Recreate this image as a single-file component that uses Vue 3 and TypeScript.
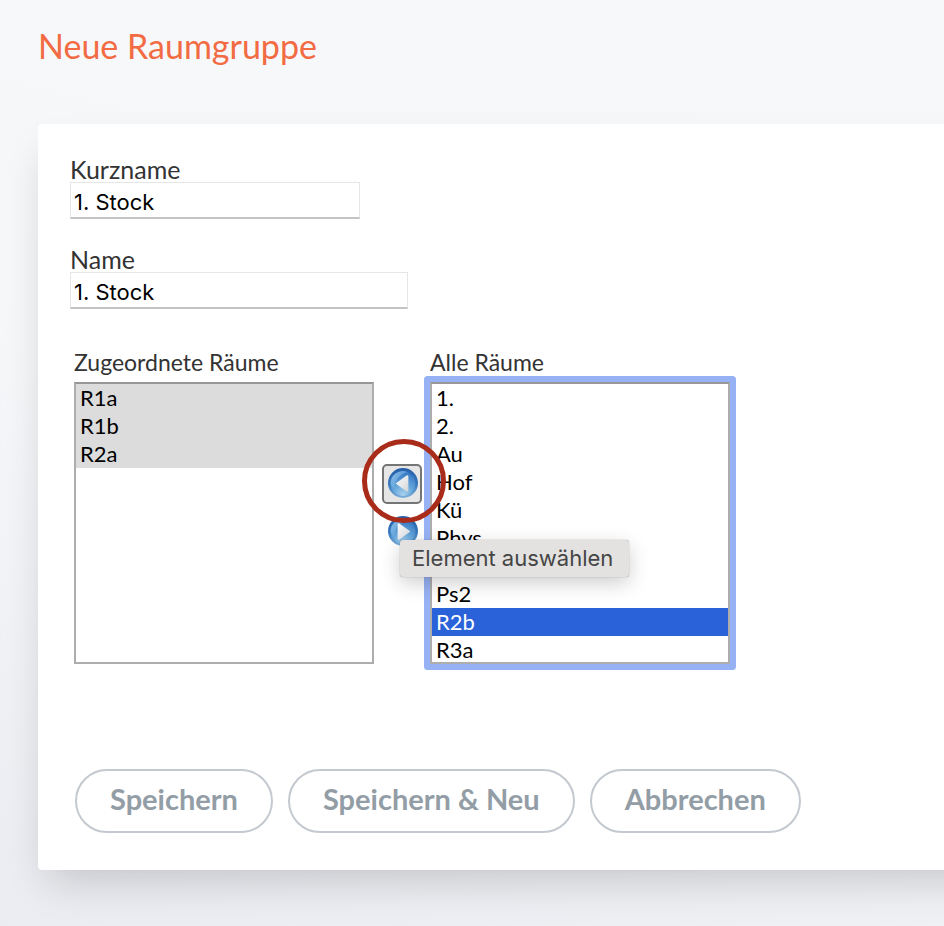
<script setup lang="ts">
import { onMounted, ref } from 'vue'

const shortName = ref('1. Stock')
const name = ref('1. Stock')

const assignedRooms = ['R1a', 'R1b', 'R2a']
const allRooms = ['1.', '2.', 'Au', 'Hof', 'Kü', 'Phys', 'Ps1', 'Ps2', 'R2b', 'R3a']

const assignedSelection = ref<string[]>([...assignedRooms])
const roomSelection = ref<string[]>(['R2b'])

const allRoomsList = ref<HTMLSelectElement | null>(null)
onMounted(() => allRoomsList.value?.focus({ preventScroll: true }))
</script>

<template>
  <main class="page">
    <h1 class="title">Neue Raumgruppe</h1>
    <form class="card" @submit.prevent>
      <div class="field">
        <label for="short-name">Kurzname</label>
        <input id="short-name" v-model="shortName" class="text short" type="text" />
      </div>
      <div class="field">
        <label for="name">Name</label>
        <input id="name" v-model="name" class="text long" type="text" />
      </div>

      <div class="picker">
        <div class="column">
          <label for="assigned">Zugeordnete Räume</label>
          <select id="assigned" v-model="assignedSelection" class="list assigned" multiple>
            <option v-for="room in assignedRooms" :key="room" :value="room">{{ room }}</option>
          </select>
        </div>

        <div class="moves">
          <div class="anchor">
            <button class="move active" type="button" aria-describedby="tip" aria-label="Element auswählen">
              <svg class="orb" viewBox="0 0 32 32" aria-hidden="true">
                <defs>
                  <linearGradient id="rim" x1="0" y1="0" x2="0" y2="1">
                    <stop offset="0" stop-color="#2860a8" />
                    <stop offset="0.55" stop-color="#3678bd" />
                    <stop offset="1" stop-color="#7fb0da" />
                  </linearGradient>
                  <radialGradient id="core" cx="0.5" cy="0.95" r="0.9">
                    <stop offset="0" stop-color="#a8d2ee" />
                    <stop offset="0.45" stop-color="#68a8dc" />
                    <stop offset="1" stop-color="#3577c2" />
                  </radialGradient>
                  <linearGradient id="gloss" x1="0" y1="0" x2="1" y2="1">
                    <stop offset="0" stop-color="#a9d6f5" stop-opacity="0.95" />
                    <stop offset="0.5" stop-color="#8cc2ec" stop-opacity="0.4" />
                    <stop offset="1" stop-color="#8cc2ec" stop-opacity="0" />
                  </linearGradient>
                  <linearGradient id="arrow" x1="0" y1="0" x2="1" y2="1">
                    <stop offset="0" stop-color="#f8f9fa" />
                    <stop offset="0.6" stop-color="#e6e7e9" />
                    <stop offset="1" stop-color="#cfd2d5" />
                  </linearGradient>
                </defs>
                <circle cx="17" cy="15" r="15" fill="url(#rim)" />
                <circle cx="17" cy="15.5" r="12.4" fill="url(#core)" />
                <path d="M4.8 17A12.2 12.2 0 0 1 22 4.2C14 6 9 11 8 21Z" fill="url(#gloss)" />
                <path d="M9.6 15.6L20.6 7.6Q22.4 6.8 22.4 8.8V22.2Q22.4 24.4 20.6 23.6Z" fill="url(#arrow)" />
              </svg>
            </button>
            <span class="ring"></span>
            <span id="tip" class="tooltip" role="tooltip">Element auswählen</span>
          </div>
          <button class="move" type="button" aria-label="Element entfernen">
            <svg class="orb" viewBox="0 0 32 32" aria-hidden="true">
              <circle cx="17" cy="16" r="15" fill="url(#rim)" />
              <circle cx="17" cy="16.5" r="12.4" fill="url(#core)" />
              <path d="M4.8 18A12.2 12.2 0 0 1 22 5.2C14 7 9 12 8 22Z" fill="url(#gloss)" />
              <path d="M24.4 16.6L13.4 8.6Q11.6 7.8 11.6 9.8V23.2Q11.6 25.4 13.4 24.6Z" fill="url(#arrow)" />
            </svg>
          </button>
        </div>

        <div class="column">
          <label for="all">Alle Räume</label>
          <select id="all" ref="allRoomsList" v-model="roomSelection" class="list all" multiple>
            <option v-for="room in allRooms" :key="room" :value="room">{{ room }}</option>
          </select>
        </div>
      </div>

      <div class="actions">
        <button class="pill" type="submit">Speichern</button>
        <button class="pill" type="submit">Speichern &amp; Neu</button>
        <button class="pill" type="button">Abbrechen</button>
      </div>
    </form>
  </main>
</template>

<style>
body {
  margin: 0;
}
</style>

<style scoped>
.page {
  box-sizing: border-box;
  min-height: 100vh;
  padding: 22px 0 56px 38px;
  overflow: hidden;
  background: linear-gradient(195deg, #f7f8fa 0%, #f6f7f9 50%, #ebecf1 100%);
  color: #333;
  font-family: Avenir, Lato, sans-serif;
}

.title {
  margin: 0 0 54px;
  color: #f26b43;
  font-size: 34px;
  font-weight: 400;
  line-height: 48px;
}

/* The card runs past the right edge of the window. */
.card {
  box-sizing: border-box;
  margin-right: -80px;
  padding: 32px 112px 37px 32px;
  border-radius: 4px;
  background: #fff;
  box-shadow: 0 20px 40px -10px rgba(0, 0, 0, 0.18);
}

.field {
  display: flex;
  flex-direction: column;
  align-items: flex-start;
  margin-bottom: 27px;
  font-size: 25px;
  line-height: 26px;
}

.text {
  box-sizing: border-box;
  max-width: 100%;
  height: 37px;
  padding: 4px 3px 0;
  border: 1px solid #e6e6e6;
  border-bottom: 2px solid #c4c4c4;
  border-radius: 0;
  outline: none;
  background: #fff;
  color: #000;
  font-family: Inter, sans-serif;
  font-size: 22px;
}

.short {
  width: 290px;
}

.long {
  width: 338px;
}

.picker {
  display: flex;
  padding: 11px 4px 0;
}

.column {
  display: flex;
  flex-direction: column;
  width: 300px;
  font-size: 23px;
  line-height: 30px;
}

.column label {
  margin-bottom: 5px;
}

.list {
  box-sizing: border-box;
  width: 100%;
  height: 282px;
  padding: 0;
  overflow: hidden;
  border: 2px solid #adadad;
  border-top-color: #979797;
  border-radius: 0;
  outline: none;
  background: #fff;
  color: #000;
  font-family: inherit;
  font-size: 22px;
}

.list option {
  box-sizing: border-box;
  height: 28px;
  min-height: 28px;
  padding: 0 4px;
}

.assigned option:checked {
  background: linear-gradient(#dcdcdc, #dcdcdc);
  -webkit-text-fill-color: #000;
}

.all {
  box-shadow: 0 0 0 6px #97b2f4;
  border-radius: 1px;
}

.all option:checked {
  background: linear-gradient(#2962d9, #2962d9);
  -webkit-text-fill-color: #fff;
}

.moves {
  display: flex;
  flex-direction: column;
  align-items: center;
  gap: 7px;
  width: 56px;
  padding-top: 117px;
}

.anchor {
  position: relative;
  z-index: 1;
}

.move {
  display: grid;
  place-items: center;
  box-sizing: border-box;
  width: 40px;
  height: 40px;
  padding: 0;
  border: 2px solid transparent;
  border-radius: 5px;
  background: transparent;
}

.active {
  border-color: #757575;
  background: #e6e6e6;
}

.orb {
  display: block;
  width: 32px;
  height: 32px;
}

.ring {
  position: absolute;
  top: -25px;
  left: -20px;
  box-sizing: border-box;
  width: 84px;
  height: 84px;
  border: 5px solid #a92b19;
  border-radius: 50%;
  pointer-events: none;
}

.tooltip {
  position: absolute;
  top: 76px;
  left: 18px;
  padding: 0 16px 0 12px;
  border-radius: 3px;
  background: #e3e2e0;
  box-shadow: 0 0 1px rgba(0, 0, 0, 0.5), 0 6px 20px rgba(0, 0, 0, 0.2);
  color: #454545;
  font-family: Inter, sans-serif;
  font-size: 22px;
  line-height: 37px;
  white-space: nowrap;
}

.actions {
  display: flex;
  flex-wrap: wrap;
  gap: 15px;
  margin-top: 105px;
  padding-left: 5px;
}

.pill {
  box-sizing: border-box;
  height: 64px;
  padding: 0 33px 6px;
  border: 2px solid #c3c9cf;
  border-radius: 32px;
  background: #fff;
  color: #929da6;
  font-family: inherit;
  font-size: 29px;
  font-weight: 700;
}
</style>
